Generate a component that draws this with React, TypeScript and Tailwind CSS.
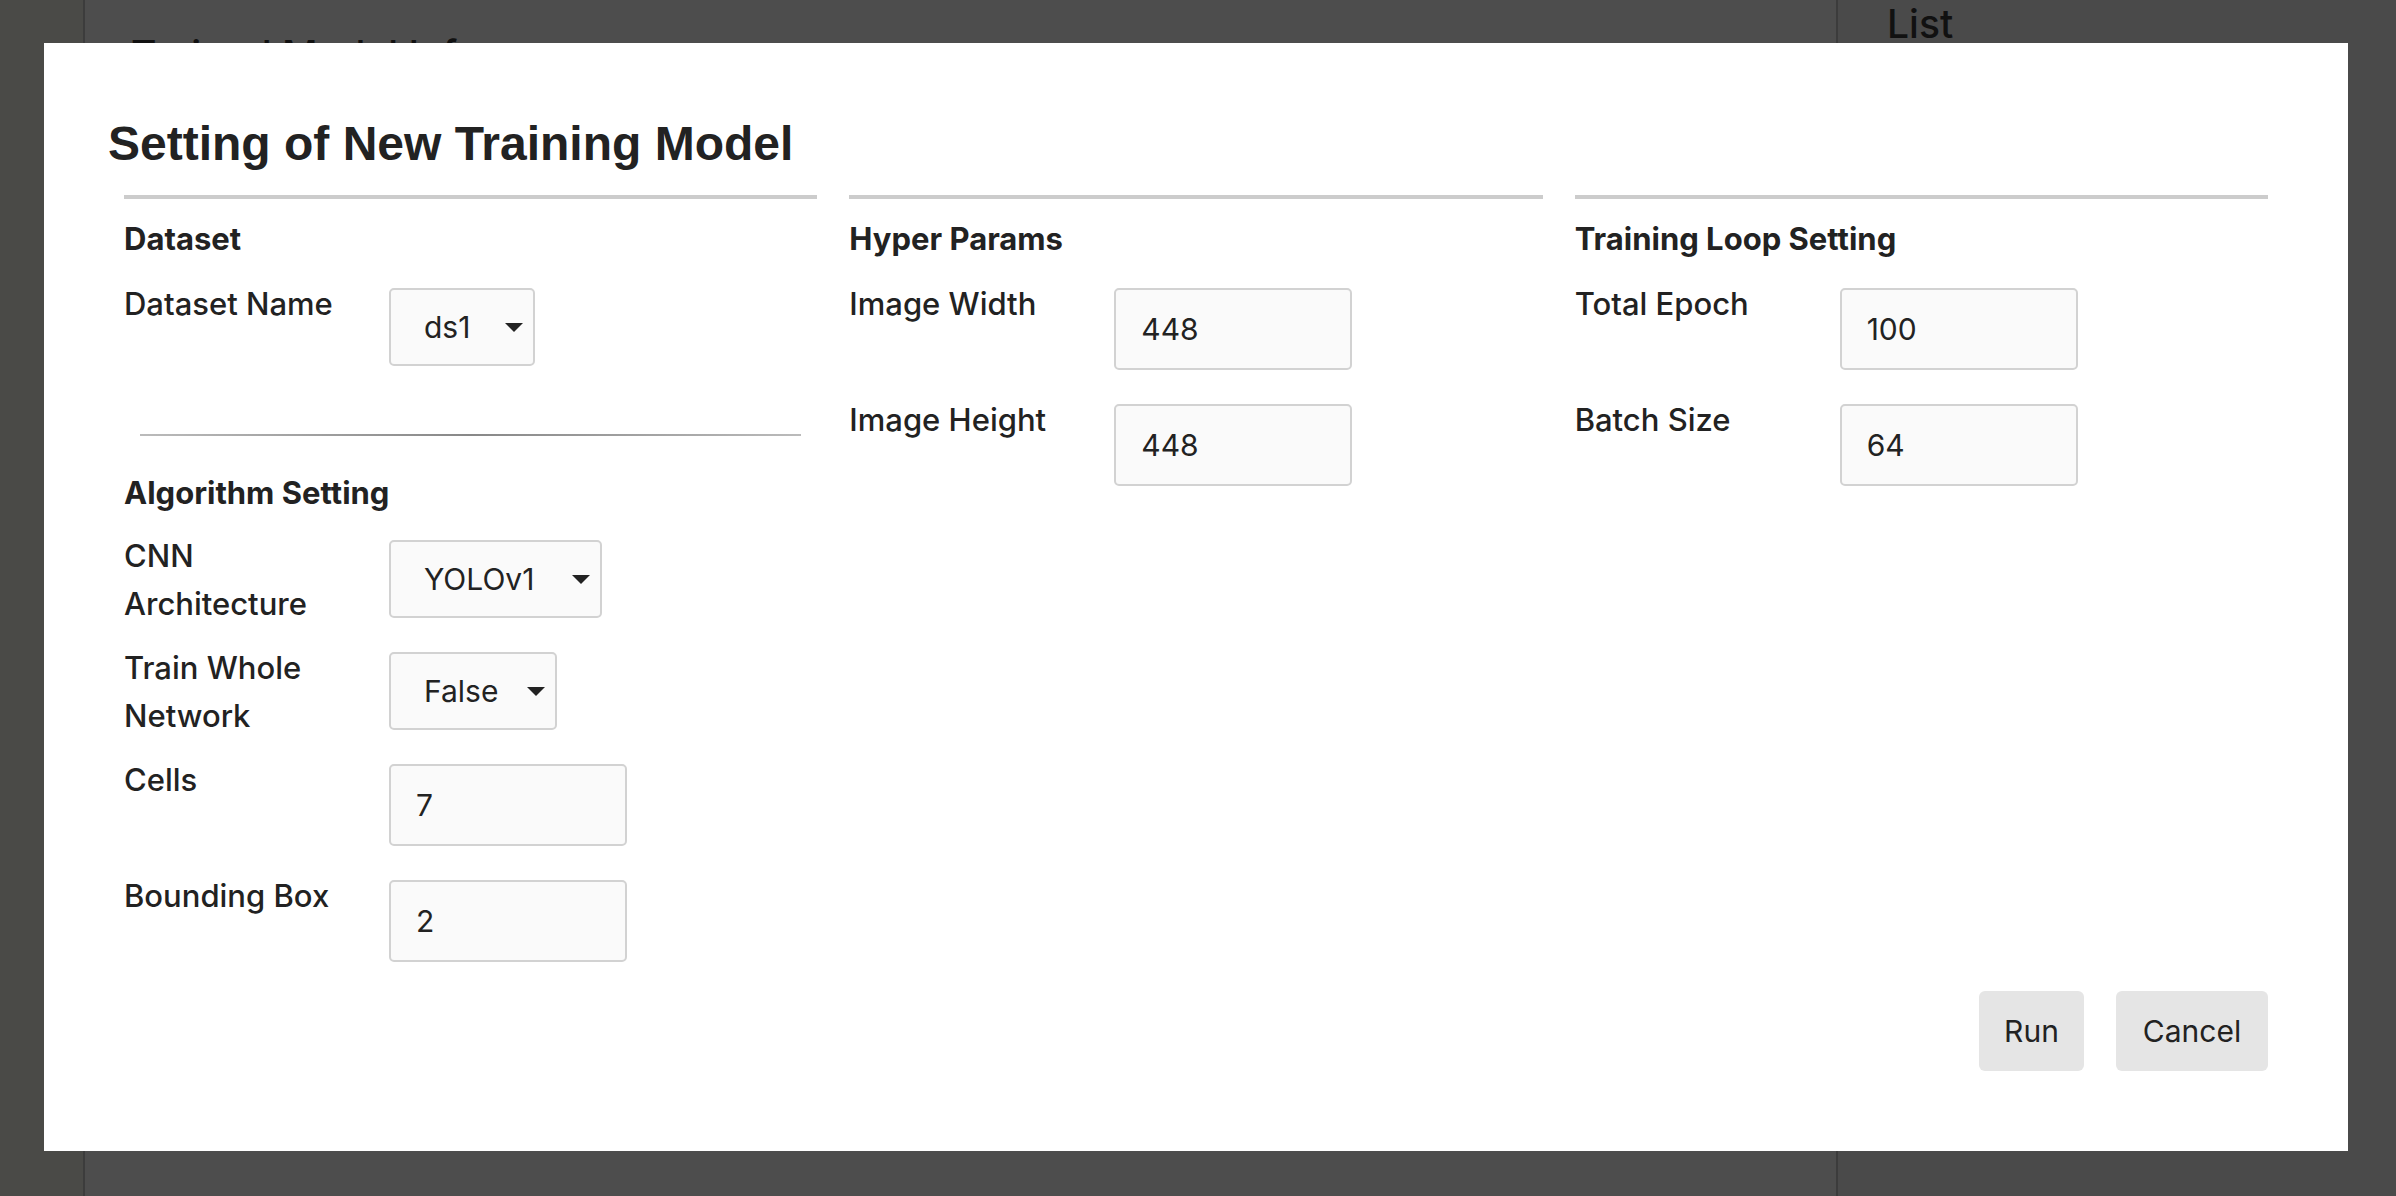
import React from "react";

function Caret() {
  return (
    <svg width="18" height="9" viewBox="0 0 18 9" className="shrink-0">
      <path d="M0 0 L18 0 L9 9 Z" fill="#222222" />
    </svg>
  );
}

function Select({ value, width }: { value: string; width: string }) {
  return (
    <div
      className={`${width} h-[78px] flex items-center justify-between pl-[33px] pr-[10px] bg-[#fafafa] border-2 border-[#d2d2d2] rounded-[5px] text-[30px] text-[#222222]`}
    >
      <span>{value}</span>
      <Caret />
    </div>
  );
}

function Input({ value }: { value: string }) {
  return (
    <div className="w-[238px] h-[82px] flex items-center pl-[25px] bg-[#fafafa] border-2 border-[#d2d2d2] rounded-[5px] text-[30px] text-[#222222]">
      {value}
    </div>
  );
}

function Row({ label, children }: { label: React.ReactNode; children: React.ReactNode }) {
  return (
    <div className="flex items-start">
      <div className="w-[230px] mr-[35px] shrink-0 text-[31px] leading-[48px] font-medium text-[#222222]">
        {label}
      </div>
      <div className="mt-[8px] mb-[26px]">{children}</div>
    </div>
  );
}

function Header({ children, className = "" }: { children: React.ReactNode; className?: string }) {
  return (
    <div className={`text-[31px] leading-[48px] font-bold text-[#222222] ${className}`}>{children}</div>
  );
}

export default function App() {
  return (
    <div className="relative w-[2396px] h-[1196px] overflow-hidden flex font-['Inter',sans-serif]">
      {/* background page */}
      <div className="w-[85px] h-full bg-[#4a4a47] border-r-2 border-[#3c3c3c] shrink-0" />
      <div className="flex-1 h-full bg-[#4d4d4d] pl-[46px] pt-[31px]">
        <div className="text-[39px] leading-[48px] font-medium text-[#111111]">Trained Model Info</div>
      </div>
      <div className="w-[560px] h-full bg-[#4a4a4a] border-l-2 border-[#3c3c3c] shrink-0 pl-[49px]">
        <div className="text-[39px] leading-[48px] font-medium text-[#111111]">List</div>
      </div>

      {/* modal */}
      <div className="absolute left-[44px] top-[43px] w-[2304px] h-[1108px] bg-white flex flex-col pt-[73px] px-[64px] pb-[80px]">
        <h1 className="text-[48px] leading-[56px] font-bold text-[#222222] font-['Liberation_Sans',Arial,sans-serif]">
          Setting of New Training Model
        </h1>

        <div className="mt-[23px] px-[16px] grid grid-cols-3 gap-x-[32px]">
          {/* column 1 */}
          <div className="flex flex-col">
            <div className="h-[4px] bg-[#cccccc]" />
            <Header className="mt-[16px]">Dataset</Header>
            <div className="mt-[17px]">
              <Row label="Dataset Name">
                <Select value="ds1" width="w-[146px]" />
              </Row>
            </div>
            <div className="mt-[42px] mx-[16px] h-[2px] bg-gradient-to-r from-[#bbbbbb] via-[#888888] to-[#bbbbbb]" />
            <Header className="mt-[33px]">Algorithm Setting</Header>
            <div className="mt-[15px]">
              <Row label="CNN Architecture">
                <Select value="YOLOv1" width="w-[213px]" />
              </Row>
              <Row label="Train Whole Network">
                <Select value="False" width="w-[168px]" />
              </Row>
              <Row label="Cells">
                <Input value="7" />
              </Row>
              <Row label="Bounding Box">
                <Input value="2" />
              </Row>
            </div>
          </div>

          {/* column 2 */}
          <div className="flex flex-col">
            <div className="h-[4px] bg-[#cccccc]" />
            <Header className="mt-[16px]">Hyper Params</Header>
            <div className="mt-[17px]">
              <Row label="Image Width">
                <Input value="448" />
              </Row>
              <Row label="Image Height">
                <Input value="448" />
              </Row>
            </div>
          </div>

          {/* column 3 */}
          <div className="flex flex-col">
            <div className="h-[4px] bg-[#cccccc]" />
            <Header className="mt-[16px]">Training Loop Setting</Header>
            <div className="mt-[17px]">
              <Row label="Total Epoch">
                <Input value="100" />
              </Row>
              <Row label="Batch Size">
                <Input value="64" />
              </Row>
            </div>
          </div>
        </div>

        <div className="mt-auto px-[16px] flex justify-end gap-[32px]">
          <button className="h-[80px] w-[105px] bg-[#e5e5e5] rounded-[6px] text-[30px] text-[#222222]">Run</button>
          <button className="h-[80px] w-[152px] bg-[#e5e5e5] rounded-[6px] text-[30px] text-[#222222]">Cancel</button>
        </div>
      </div>
    </div>
  );
}
